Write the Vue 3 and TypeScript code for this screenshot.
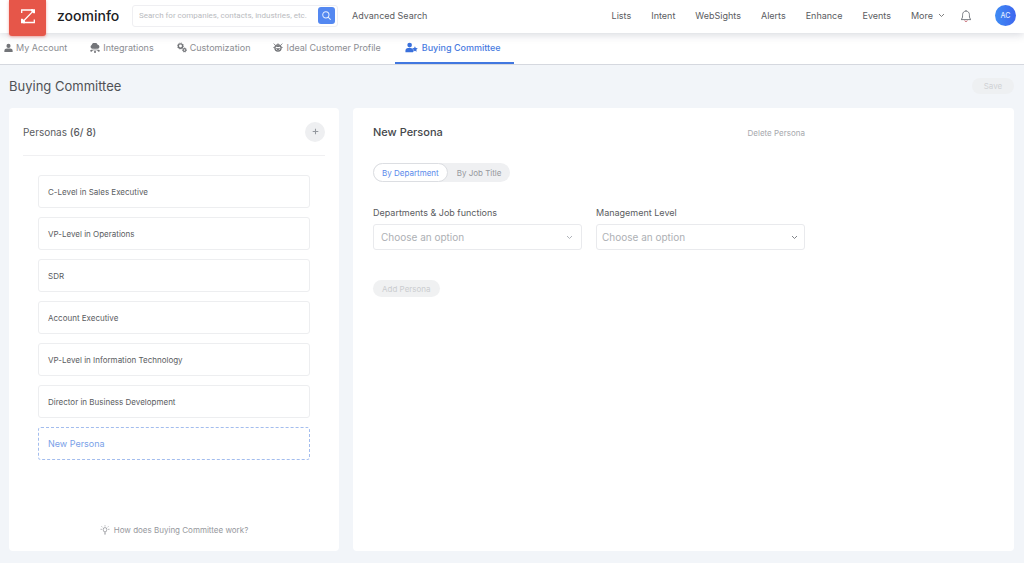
<script setup lang="ts">
import { ref } from 'vue'

const navLinks: string[] = ['Lists', 'Intent', 'WebSights', 'Alerts', 'Enhance', 'Events']

interface Tab { label: string; icon: string }
const tabs: Tab[] = [
  { label: 'My Account', icon: 'user' },
  { label: 'Integrations', icon: 'plug' },
  { label: 'Customization', icon: 'gears' },
  { label: 'Ideal Customer Profile', icon: 'profile' },
  { label: 'Buying Committee', icon: 'committee' },
]
const activeTab = ref('Buying Committee')

const personas: string[] = [
  'C-Level in Sales Executive',
  'VP-Level in Operations',
  'SDR',
  'Account Executive',
  'VP-Level in Information Technology',
  'Director in Business Development',
]
const mode = ref<'department' | 'title'>('department')
const query = ref('')
</script>

<template>
  <div class="page">
    <header class="topbar">
      <a class="logo" href="#" aria-label="Home">
        <svg viewBox="0 0 18 18" width="18" height="18" fill="none" stroke="#fff" stroke-width="1.3">
          <path d="M2.700 6V3H14M15.300 12.500v3H4" />
          <path d="M4 14.500L13.600 4.600" />
          <path d="M12 2.300h4v4h-1.600L12 3.900zM2 11.700h1.600L6 14.100v2.100H2z" fill="#fff" stroke="none" />
        </svg>
      </a>
      <a class="brand" href="#">zoominfo</a>
      <form class="search" role="search" @submit.prevent>
        <input v-model="query" type="text" aria-label="Search" placeholder="Search for companies, contacts, industries, etc." />
        <button type="submit" aria-label="Run search">
          <svg viewBox="0 0 12 12" width="11" height="11" fill="none" stroke="#e8f0ff" stroke-width="1.1" stroke-linecap="round">
            <circle cx="5.3" cy="5.3" r="3.4" /><path d="M8 8l2.200 2.200" />
          </svg>
        </button>
      </form>
      <a class="advanced" href="#">Advanced Search</a>
      <nav class="main-nav">
        <a v-for="link in navLinks" :key="link" href="#">{{ link }}</a>
        <button type="button" class="more">
          More
          <svg viewBox="0 0 8 6" width="7" height="5" fill="none" stroke="#666" stroke-width="1"><path d="M1 1.200l3 3 3-3" /></svg>
        </button>
      </nav>
      <button type="button" class="bell" aria-label="Notifications">
        <svg viewBox="0 0 14 16" width="12" height="14" fill="none" stroke="#74787f" stroke-width="1.1" stroke-linejoin="round">
          <path d="M7 1v1.300M1.200 12.200c1.300-1 1.800-2.300 1.800-4.400V6.500C3 4 4.700 2.300 7 2.300S11 4 11 6.500v1.300c0 2.100.5 3.400 1.800 4.400z" />
          <path d="M5.400 13.300c.3 1.500 2.900 1.500 3.200 0" stroke="#c4616b" />
        </svg>
      </button>
      <button type="button" class="avatar">AC</button>
    </header>

    <nav class="tabs">
      <a v-for="tab in tabs" :key="tab.label" href="#" :class="{ active: tab.label === activeTab }" @click.prevent="activeTab = tab.label">
        <svg v-if="tab.icon === 'user'" viewBox="0 0 10 10" width="9" height="10" fill="currentColor">
          <circle cx="5" cy="2.700" r="2.300" /><path d="M.4 9.500V8.200C.4 6.500 1.700 5.600 3.200 5.600h3.600c1.500 0 2.800.9 2.800 2.600v1.300z" />
        </svg>
        <svg v-else-if="tab.icon === 'plug'" viewBox="0 0 12 12" width="10" height="10" fill="currentColor">
          <path d="M2.400 6.800A2.300 2.300 0 0 1 2 2.500 3.800 3.800 0 0 1 9.200 2a2.500 2.500 0 0 1 .5 4.800z" />
          <path d="M6 6.500v4M3.800 7.500v1.300H1.500M8.200 7.500v1.300h2.300" fill="none" stroke="currentColor" stroke-width=".9" />
          <circle cx="1.500" cy="9.200" r="1.200" /><circle cx="6" cy="10.700" r="1.200" /><circle cx="10.500" cy="9.200" r="1.200" />
        </svg>
        <svg v-else-if="tab.icon === 'gears'" viewBox="0 0 12 12" width="10" height="11" fill="none" stroke="currentColor">
          <circle cx="4.200" cy="4.200" r="2.600" stroke-width="1.700" />
          <circle cx="4.200" cy="4.200" r="3.700" stroke-width=".8" stroke-dasharray="1.400 1.500" />
          <circle cx="9" cy="9" r="1.700" stroke-width="1.400" />
          <circle cx="9" cy="9" r="2.500" stroke-width=".8" stroke-dasharray="1.100 .9" />
        </svg>
        <svg v-else-if="tab.icon === 'profile'" viewBox="0 0 12 12" width="10" height="11" fill="none" stroke="currentColor">
          <circle cx="6" cy="6.500" r="3.700" stroke-width="1.500" />
          <path d="M3.200 7h5.600L6 10zM3 5.500L6 3l3 2.500z" fill="currentColor" stroke="none" />
          <path d="M.8 1.300l2 2M11.200 1.300l-2 2M.4 6h1.800M11.600 6H9.800M6 1v2" />
        </svg>
        <svg v-else viewBox="0 0 14 11" width="13" height="11" fill="currentColor">
          <circle cx="5" cy="2.900" r="2.500" />
          <path d="M.5 10.500V8.700c0-1.600 1.200-2.700 2.800-2.700h2.800c.6 0 1.200.2 1.600.5L9 8.300l-.4 2.200z" />
          <path d="M10.700 4.100l.9 1.900 2.100.3-1.500 1.500.4 2.200-1.900-1-1.900 1 .4-2.200-1.500-1.500 2.100-.3z" />
        </svg>
        <span>{{ tab.label }}</span>
      </a>
    </nav>

    <main>
      <div class="heading">
        <h1>Buying Committee</h1>
        <button type="button" class="save" disabled>Save</button>
      </div>
      <div class="panels">
        <section class="panel personas">
          <div class="personas-head">
            <h2>Personas <b>(6/ 8)</b></h2>
            <button type="button" class="add" aria-label="New persona">
              <svg viewBox="0 0 8 8" width="7" height="7" stroke="#94989e" stroke-width="1.200"><path d="M4 .8v6.400M.8 4h6.400" /></svg>
            </button>
          </div>
          <ul>
            <li v-for="p in personas" :key="p"><button type="button">{{ p }}</button></li>
            <li><button type="button" class="current">New Persona</button></li>
          </ul>
          <a class="help" href="#">
            <svg viewBox="0 0 12 12" width="10" height="10" fill="none" stroke="#8b8d92" stroke-width=".9">
              <path d="M4.800 8.200C4.600 7.200 3.800 6.800 3.800 5.300a2.200 2.200 0 0 1 4.400 0c0 1.500-.8 1.900-1 2.900zM4.900 9.700h2.200M5.300 11h1.400" />
              <path d="M6 .4v1.300M1.900 1.700l1 1M10.100 1.700l-1 1M.7 5.200h1.500M11.300 5.200H9.800" />
            </svg>
            <span>How does Buying Committee work?</span>
          </a>
        </section>

        <section class="panel editor">
          <div class="editor-body">
            <div class="editor-head">
              <h2>New Persona</h2>
              <button type="button" class="delete">Delete Persona</button>
            </div>
            <div class="switch">
              <button type="button" :class="{ on: mode === 'department' }" @click="mode = 'department'">By Department</button>
              <button type="button" :class="{ on: mode === 'title' }" @click="mode = 'title'">By Job Title</button>
            </div>
            <div class="fields">
              <div class="field">
                <label for="department">Departments &amp; Job functions</label>
                <div class="select">
                  <select id="department"><option>Choose an option</option></select>
                  <svg viewBox="0 0 8 6" width="7" height="5" fill="none" stroke="#a9adb3" stroke-width="1.100"><path d="M1 1.200l3 3 3-3" /></svg>
                </div>
              </div>
              <div class="field second">
                <label for="level">Management Level</label>
                <div class="select">
                  <select id="level"><option>Choose an option</option></select>
                  <svg viewBox="0 0 8 6" width="7" height="5" fill="none" stroke="#74787e" stroke-width="1.100"><path d="M1 1.200l3 3 3-3" /></svg>
                </div>
              </div>
            </div>
            <button type="button" class="submit" disabled>Add Persona</button>
          </div>
        </section>
      </div>
    </main>
  </div>
</template>

<style>
body { margin: 0; background: #f2f5f9; }
</style>

<style scoped>
.page {
  min-height: 100vh;
  display: flex;
  flex-direction: column;
  background: #f2f5f9;
  color: #5a5c61;
  font-family: Inter, "Liberation Sans", sans-serif;
  font-size: 9px;
  line-height: 12px;
}
.page *, .page *::before { box-sizing: border-box; }
a { color: inherit; text-decoration: none; }
button, input, select { font: inherit; color: inherit; border: 0; padding: 0; margin: 0; background: none; }
h1, h2, ul { margin: 0; padding: 0; font-weight: 400; }
ul { list-style: none; }
svg { flex: none; display: block; }

.topbar {
  position: relative;
  z-index: 1;
  display: flex;
  align-items: center;
  height: 33px;
  padding: 0 8px 2px 9px;
  background: #fff;
  box-shadow: 0 1px 9px rgba(40, 50, 80, .22);
}
.logo {
  display: flex;
  align-items: center;
  justify-content: center;
  align-self: flex-start;
  width: 37px;
  height: 36px;
  padding-bottom: 4px;
  border-radius: 0 0 3px 3px;
  background: #e65649;
  box-shadow: 0 1px 3px rgba(231, 83, 71, .5);
}
.brand {
  width: 74px;
  padding-left: 11px;
  font-size: 14px;
  line-height: 18px;
  font-weight: 500;
  color: #202124;
}
.search {
  display: flex;
  align-items: center;
  width: 206px;
  height: 22px;
  margin-left: 12px;
  padding: 0 2px 0 6px;
  border: 1px solid #efeff2;
  border-radius: 3px;
}
.search input { flex: 1; min-width: 0; font-family: Roboto, "Liberation Sans", sans-serif; font-size: 8px; outline: 0; }
.search input::placeholder { color: #b9bbc0; opacity: 1; }
.search button {
  display: flex;
  align-items: center;
  justify-content: center;
  width: 17px;
  height: 17px;
  border-radius: 3px;
  background: #5488f1;
}
.advanced { margin-left: 14px; }
.main-nav { display: flex; gap: 20px; margin-left: auto; }
.more { display: flex; align-items: center; gap: 5px; }
.bell { margin-left: 15px; }
.avatar {
  width: 21px;
  height: 21px;
  margin-left: 23px;
  border-radius: 50%;
  background: linear-gradient(90deg, #3f8cf4, #3e66ef);
  color: #dfe9ff;
  font-size: 7px;
  font-weight: 500;
}

.tabs {
  display: flex;
  height: 32px;
  padding-left: 4px;
  gap: 23px;
  background: #fff;
  border-bottom: 1px solid #d5d8df;
  color: #8b8d92;
}
.tabs a { display: flex; align-items: center; gap: 3px; height: 31px; padding-bottom: 2px; }
.tabs svg { color: #737579; }
.tabs .active {
  gap: 4px;
  margin-left: -9px;
  padding: 0 13px 0 10px;
  border-bottom: 2px solid #4177e0;
  color: #4a7cdf;
  font-weight: 500;
}
.tabs .active svg { color: #3a70dc; }

main { flex: 1; display: flex; flex-direction: column; padding: 0 10px 12px 9px; }
.heading { display: flex; align-items: center; justify-content: space-between; height: 43px; padding-bottom: 1px; }
h1 { font-size: 13px; line-height: 18px; color: #505256; }
.save { width: 42px; height: 16px; border-radius: 8px; background: #eef0f2; color: #d0d2d5; font-size: 8px; }
.panels { flex: 1; display: flex; gap: 14px; }
.panel { background: #fff; border-radius: 4px; }

.personas { display: flex; flex-direction: column; flex: 0 0 330px; padding: 0 14px; }
.personas-head {
  display: flex;
  align-items: center;
  justify-content: space-between;
  height: 48px;
  border-bottom: 1px solid #f0f0f2;
}
.personas h2 { font-size: 10px; line-height: 16px; }
.personas b { font-weight: 500; }
.add {
  display: flex;
  align-items: center;
  justify-content: center;
  width: 20px;
  height: 20px;
  border-radius: 50%;
  background: #eeeff1;
}
ul { display: flex; flex-direction: column; gap: 9px; padding: 19px 15px 0; }
li button {
  display: block;
  width: 100%;
  height: 33px;
  padding: 0 9px;
  border: 1px solid #edeef0;
  border-radius: 3px;
  text-align: left;
  font-size: 8px;
}
li .current { border: 1px dashed #a3bdee; color: #7a9fe8; font-size: 9px; }
.help {
  display: flex;
  align-items: center;
  justify-content: center;
  gap: 4px;
  margin-top: auto;
  padding-bottom: 15px;
  color: #96989d;
  font-size: 8px;
}

.editor { flex: 1; min-width: 0; padding: 17px 20px 20px; }
.editor-body { max-width: 432px; }
.editor-head { display: flex; align-items: center; justify-content: space-between; height: 15px; }
.editor h2 { font-size: 11px; line-height: 15px; font-weight: 500; color: #45474b; }
.delete { color: #a6a8ad; font-size: 8px; }
.switch {
  display: flex;
  width: fit-content;
  height: 19px;
  margin-top: 23px;
  border-radius: 10px;
  background: #eff0f2;
  color: #96989d;
  font-size: 8px;
}
.switch button { padding: 0 8px; border: 1px solid transparent; border-radius: 10px; }
.switch .on { background: #fff; border-color: #dcdee2; color: #5b8aeb; }
.fields { display: flex; gap: 14px; margin-top: 25px; }
.field { flex: 1; min-width: 0; }
.field label { display: block; line-height: 12px; margin-bottom: 5px; }
.select { display: flex; align-items: center; border: 1px solid #e9eaed; border-radius: 3px; }
.select select {
  flex: 1;
  min-width: 0;
  height: 24px;
  padding-left: 7px;
  appearance: none;
  color: #adb0b4;
  font-size: 10px;
}
.second select { padding-left: 5px; }
.select svg { margin-right: 8px; pointer-events: none; }
.second svg { margin-right: 6px; }
.submit {
  height: 17px;
  margin-top: 30px;
  padding: 0 9px;
  border-radius: 9px;
  background: #f0f1f2;
  color: #cbcdd0;
  font-size: 8px;
}
</style>
